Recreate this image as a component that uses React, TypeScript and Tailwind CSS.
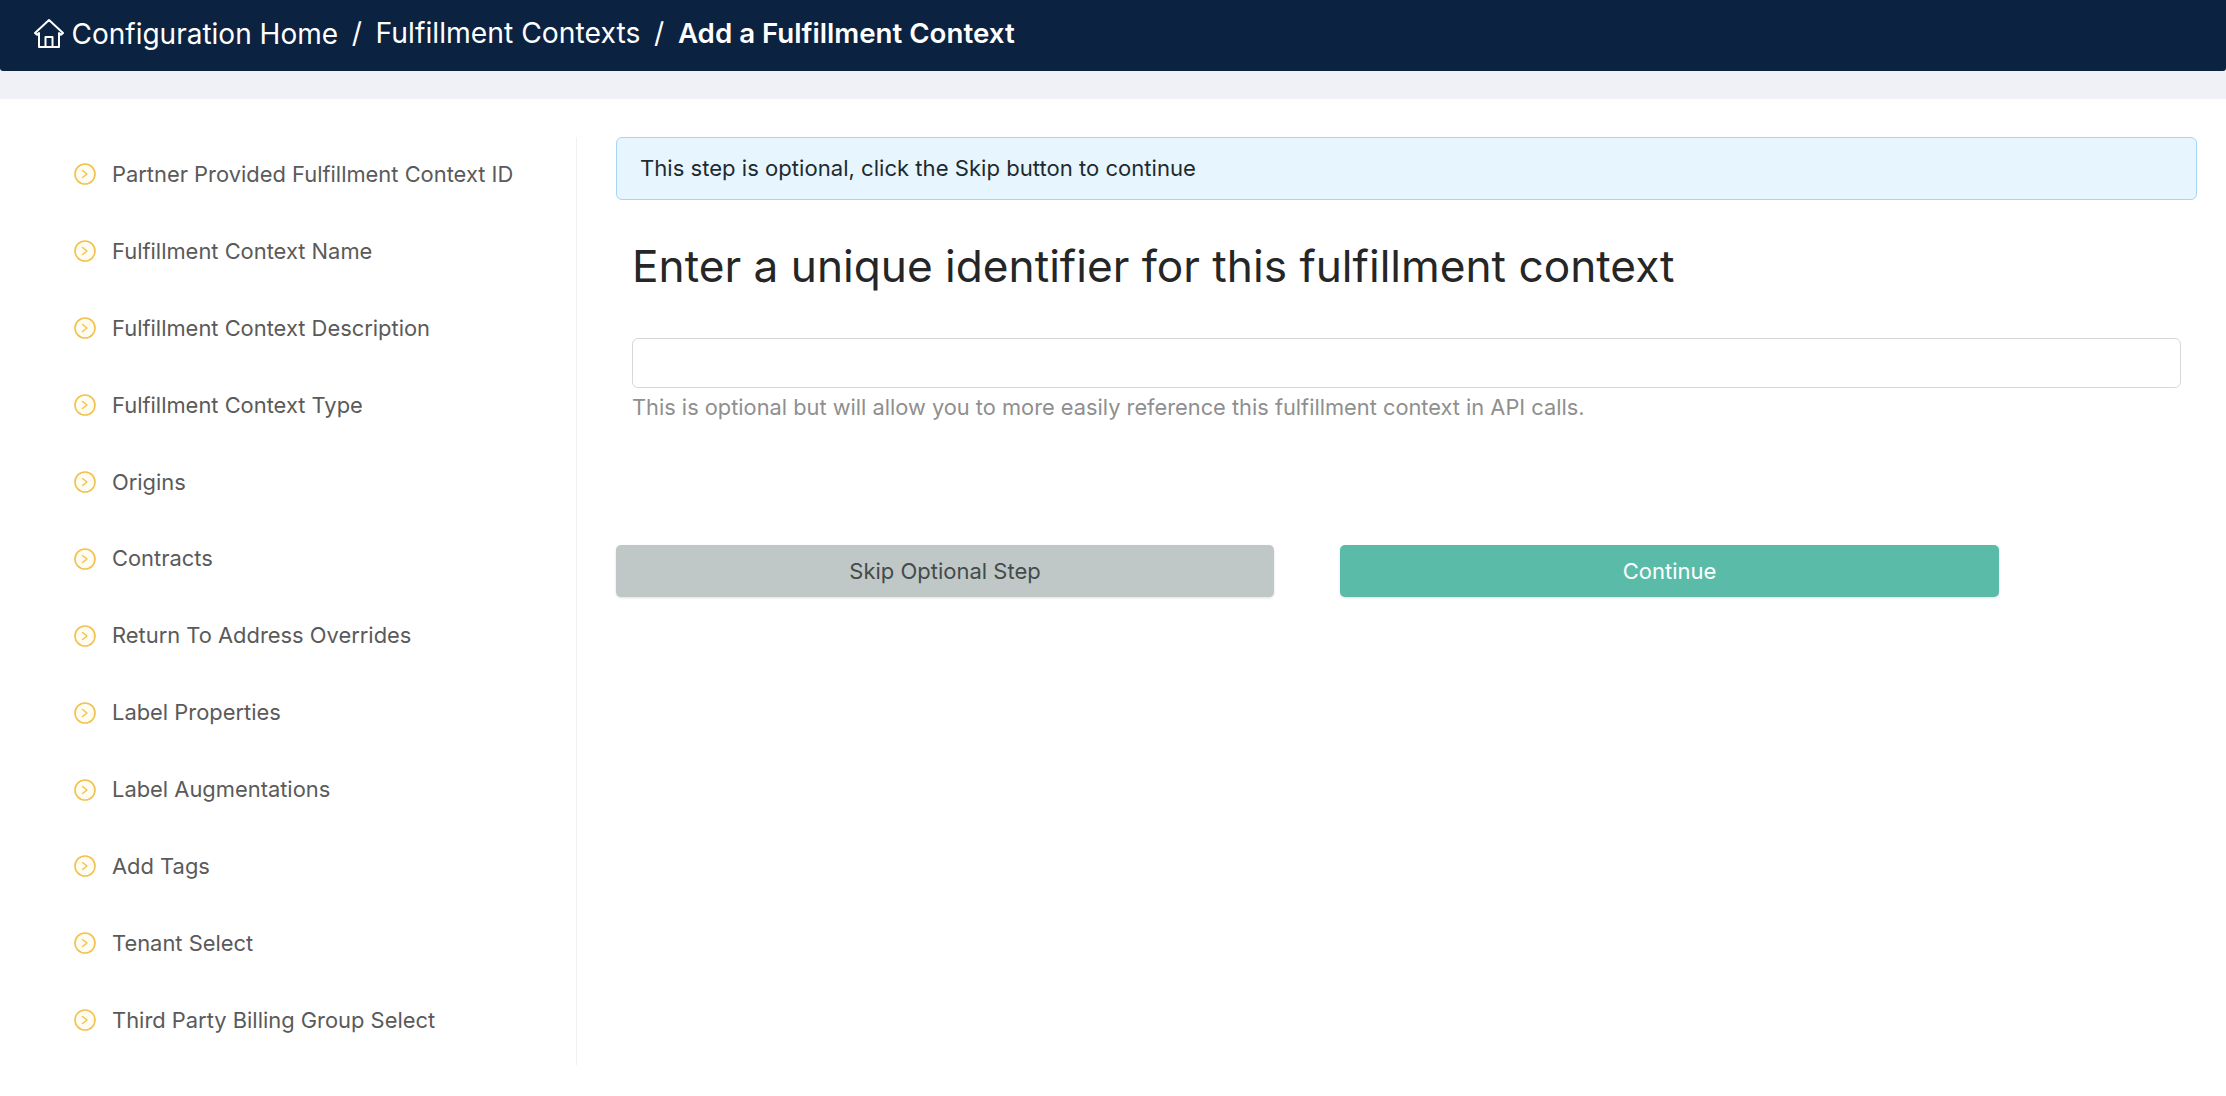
const steps = [
  "Partner Provided Fulfillment Context ID",
  "Fulfillment Context Name",
  "Fulfillment Context Description",
  "Fulfillment Context Type",
  "Origins",
  "Contracts",
  "Return To Address Overrides",
  "Label Properties",
  "Label Augmentations",
  "Add Tags",
  "Tenant Select",
  "Third Party Billing Group Select",
];

function HomeIcon() {
  return (
    <svg width="30" height="29" viewBox="0 0 30 29" fill="none" stroke="white" strokeWidth="2" strokeLinejoin="round" strokeLinecap="round" className="-mt-[1px]">
      <path d="M1 14 15 1l14 13-2 1.8-2-1.7V28H5V14.1l-2 1.7z" />
      <path d="M11.5 28V18h7v10" />
    </svg>
  );
}

function StepIcon() {
  return (
    <svg width="22" height="22" viewBox="0 0 22 22" fill="none" className="shrink-0">
      <circle cx="11" cy="11" r="10" fill="#fffcf2" stroke="#f2c14e" strokeWidth="1.6" />
      <path d="M8.5 7.5l4.5 3.5-4.5 3.5" stroke="#f2c14e" strokeWidth="1.4" strokeLinecap="round" strokeLinejoin="round" />
    </svg>
  );
}

export default function App() {
  return (
    <div className="min-h-[1096px] bg-white font-['Inter',sans-serif]">
      <header className="flex h-[71px] items-center gap-[7.5px] rounded-b-[3px] bg-[#0b2240] pb-[4px] pl-[34px] text-[28.3px] text-white">
        <HomeIcon />
        <div className="flex items-center gap-[13.7px]">
          <span className="text-[28px]">Configuration Home</span>
          <span>/</span>
          <span>Fulfillment Contexts</span>
          <span>/</span>
          <span className="text-[27.7px] font-semibold">Add a Fulfillment Context</span>
        </div>
      </header>
      <div className="h-[28px] bg-[#f0f1f6]" />
      <main className="flex pt-[38px]">
        <aside className="h-[928px] w-[577px] shrink-0 border-r border-[#f1f1f1]">
          {steps.map((s) => (
            <div key={s} className="flex h-[76.9px] items-center gap-[16px] pb-[2px] pl-[74px] text-[21.9px] text-[#5a5a5a]">
              <StepIcon />
              <span>{s}</span>
            </div>
          ))}
        </aside>
        <section className="ml-[39px] w-[1581px]">
          <div className="flex h-[63px] items-center rounded-[6px] border border-[#a5d6f7] bg-[#e7f6fe] pl-[23px] text-[22.1px] text-[#1f2a30]">
            This step is optional, click the Skip button to continue
          </div>
          <div className="mt-[39px] pl-[16px] pr-[16px]">
            <h1 className="text-[44.2px] leading-[54px] font-normal text-[#262626]">
              Enter a unique identifier for this fulfillment context
            </h1>
            <input className="mt-[45px] block h-[50px] w-full rounded-[6px] border border-[#d8d8d8] bg-white" />
            <p className="mt-[4px] text-[21.8px] leading-[30px] text-[#8f8f8f]">
              This is optional but will allow you to more easily reference this fulfillment context in API calls.
            </p>
          </div>
          <div className="mt-[123px] flex gap-[66px]">
            <button className="h-[52px] w-[658px] rounded-[5px] bg-[#bfc8c7] text-[22px] text-[#444b4b] shadow-sm">
              Skip Optional Step
            </button>
            <button className="h-[52px] w-[659px] rounded-[5px] bg-[#5abca8] text-[22px] text-white shadow-sm">
              Continue
            </button>
          </div>
        </section>
      </main>
    </div>
  );
}
